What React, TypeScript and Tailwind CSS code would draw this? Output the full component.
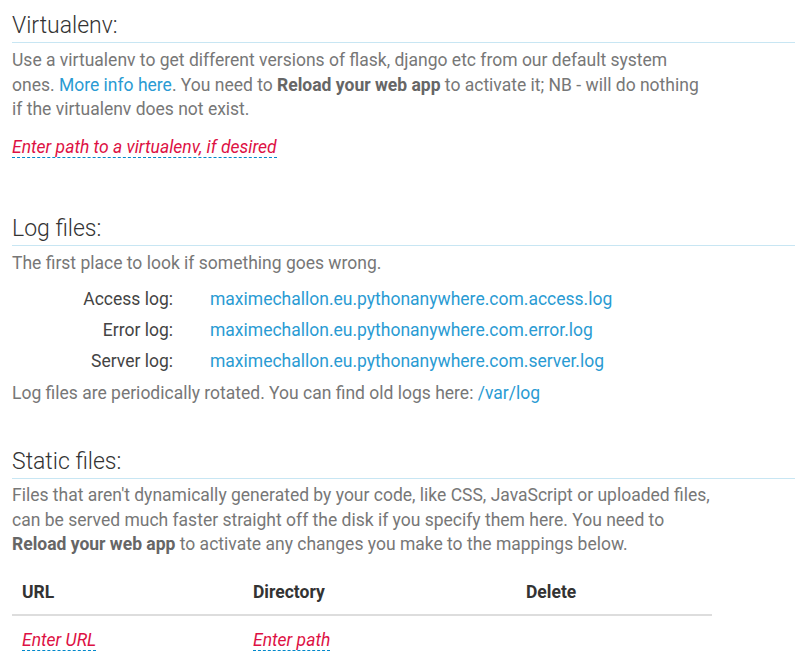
import React from "react";

const Heading = ({ children, className = "" }: { children: React.ReactNode; className?: string }) => (
  <h2 className={`text-[23px] font-light leading-[28px] text-[#333] pt-[2px] pb-[2px] border-b border-[#c8e6f3] ${className}`}>
    {children}
  </h2>
);

const Editable = ({ children }: { children: React.ReactNode }) => (
  <span className="italic text-[#dd1144] border-b border-dashed border-[#0088cc] cursor-pointer">{children}</span>
);

const logs = [
  { label: "Access log:", file: "maximechallon.eu.pythonanywhere.com.access.log" },
  { label: "Error log:", file: "maximechallon.eu.pythonanywhere.com.error.log" },
  { label: "Server log:", file: "maximechallon.eu.pythonanywhere.com.server.log" },
];

export default function App() {
  return (
    <div className="bg-white min-h-screen pl-3 text-[17.5px] leading-[24.5px] text-[#777]" style={{ fontFamily: "Roboto, 'Noto Sans', sans-serif" }}>
      {/* Virtualenv */}
      <section className="pt-[10px]">
        <Heading>Virtualenv:</Heading>
        <div className="max-w-[720px]">
          <p className="mt-[5px]">
            Use a virtualenv to get different versions of flask, django etc from our default system
            <br />
            ones. <a href="#" className="text-[#2a9bd3]">More info here</a>. You need to{" "}
            <strong className="font-bold text-[#666]">Reload your web app</strong> to activate it; NB - will do nothing
            <br />
            if the virtualenv does not exist.
          </p>
          <p className="mt-[13px]">
            <Editable>Enter path to a virtualenv, if desired</Editable>
          </p>
        </div>
      </section>

      {/* Log files */}
      <section className="mt-[54px]">
        <Heading>Log files:</Heading>
        <div className="max-w-[720px]">
          <p className="mt-[5px]">The first place to look if something goes wrong.</p>
          <div className="mt-2 grid grid-cols-[161px_1fr] gap-x-[37px]">
            {logs.map((l) => (
              <React.Fragment key={l.label}>
                <div className="text-right text-[#444] leading-[31px]">{l.label}</div>
                <a href="#" className="text-[#2a9bd3] leading-[31px]">{l.file}</a>
              </React.Fragment>
            ))}
          </div>
          <p className="mt-1">
            Log files are periodically rotated. You can find old logs here:{" "}
            <a href="#" className="text-[#2a9bd3]">/var/log</a>
          </p>
        </div>
      </section>

      {/* Static files */}
      <section className="mt-[41px]">
        <Heading>Static files:</Heading>
        <div className="max-w-[720px]">
          <p className="mt-1">
            Files that aren't dynamically generated by your code, like CSS, JavaScript or uploaded files,
            <br />
            can be served much faster straight off the disk if you specify them here. You need to
            <br />
            <strong className="font-bold text-[#666]">Reload your web app</strong> to activate any changes you make to the
            mappings below.
          </p>
          <table className="mt-[16px] w-[700px] text-left">
            <thead>
              <tr className="border-b-2 border-[#ddd]">
                <th className="w-[231px] pl-[10px] pt-[7px] pb-[10px] font-bold text-[#333]">URL</th>
                <th className="w-[273px] pl-[10px] pt-[7px] pb-[10px] font-bold text-[#333]">Directory</th>
                <th className="pl-[10px] pt-[7px] pb-[10px] font-bold text-[#333]">Delete</th>
              </tr>
            </thead>
            <tbody>
              <tr>
                <td className="pl-[10px] pt-[12px] pb-2"><Editable>Enter URL</Editable></td>
                <td className="pl-[10px] pt-[12px] pb-2"><Editable>Enter path</Editable></td>
                <td className="pl-[10px] pt-[12px] pb-2"></td>
              </tr>
            </tbody>
          </table>
        </div>
      </section>
    </div>
  );
}
